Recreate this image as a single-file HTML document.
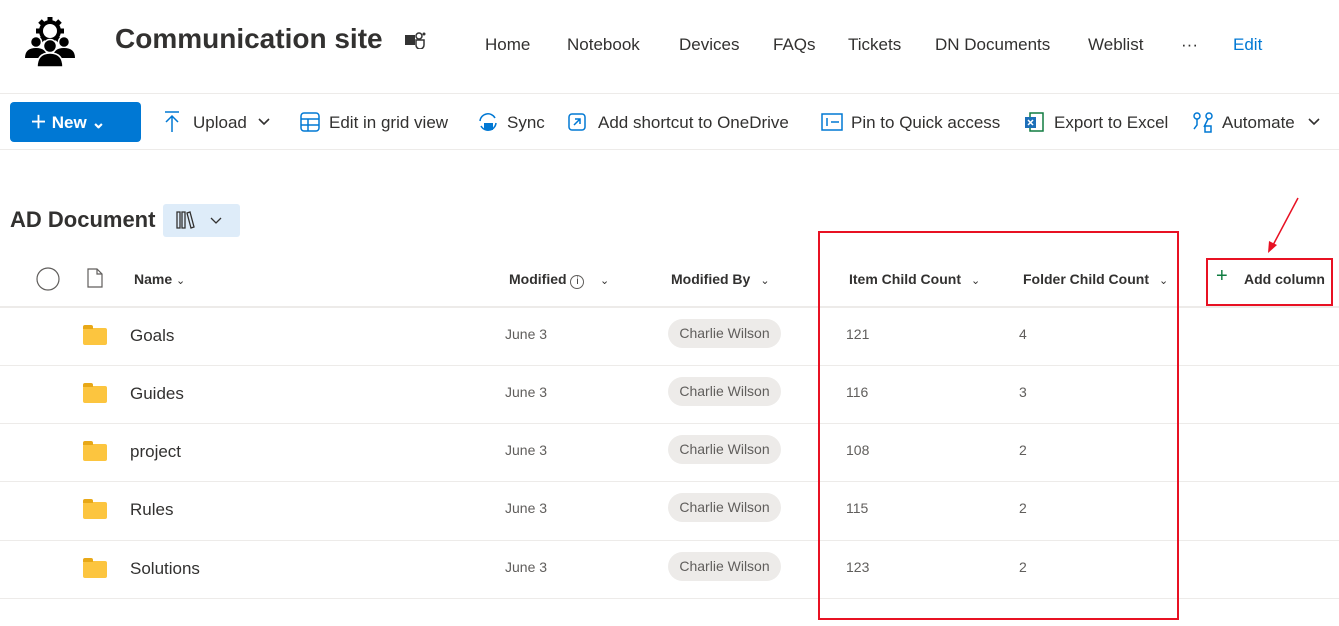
<!DOCTYPE html>
<html><head><meta charset="utf-8"><style>
*{margin:0;padding:0;box-sizing:border-box}
body{width:1339px;height:626px;background:#fff;font-family:"Segoe UI","Liberation Sans",sans-serif;color:#323130;position:relative;overflow:hidden}
.a{position:absolute;white-space:nowrap}
.nav{font-size:17px;top:35px;color:#323130}
.tb{font-size:17px;top:113px;color:#323130}
.hd{font-size:14px;font-weight:bold;top:271px;color:#323130}
.nm{font-size:17px;color:#323130}
.dt{font-size:14px;color:#605e5c}
.chip{background:#edebe9;border-radius:15px;height:29px;width:113px;font-size:14px;color:#605e5c;text-align:center;line-height:29px}
.ln{position:absolute;left:0;width:1339px;height:1px;background:#edebe9}
.fold{position:absolute;width:24px;height:17px;background:#fcc53f;border-radius:2px}
.fold:before{content:"";position:absolute;left:0;top:-3px;width:10px;height:4px;background:#e8a817;border-radius:2px 2px 0 0}
</style></head><body>
<svg class="a" style="left:24px;top:17px" width="52" height="50" viewBox="0 0 52 50"><g fill="#000"><g stroke="#000" stroke-width="5"><line x1="26" y1="0" x2="26" y2="28"/><line x1="12" y1="14" x2="40" y2="14"/><line x1="16" y1="4" x2="36" y2="24"/><line x1="36" y1="4" x2="16" y2="24"/></g><circle cx="26" cy="14" r="11"/><circle cx="26" cy="14" r="7" fill="#fff"/><circle cx="12" cy="25" r="5.5" stroke="#fff" stroke-width="1.5"/><circle cx="40" cy="25" r="5.5" stroke="#fff" stroke-width="1.5"/><path d="M1 41q0-10 11-10q11 0 11 10z"/><path d="M29 41q0-10 11-10q11 0 11 10z"/><circle cx="26" cy="29" r="6.5" stroke="#fff" stroke-width="1.5"/><path d="M13 50q0-14 13-14q13 0 13 14z" stroke="#fff" stroke-width="1.5"/></g></svg>
<div class="a" style="left:115px;top:23px;font-size:28px;font-weight:600;color:#323130">Communication site</div>
<svg class="a" style="left:404px;top:31px" width="22" height="18"><rect x="1" y="4" width="10" height="10" fill="#333"/><circle cx="15" cy="5" r="3" fill="none" stroke="#333" stroke-width="1.5"/><path d="M12 9h8v5a4 4 0 0 1-8 0z" fill="none" stroke="#333" stroke-width="1.5"/><circle cx="20" cy="3" r="1.5" fill="#333"/></svg>
<div class="a nav" style="left:485px">Home</div>
<div class="a nav" style="left:567px">Notebook</div>
<div class="a nav" style="left:679px">Devices</div>
<div class="a nav" style="left:773px">FAQs</div>
<div class="a nav" style="left:848px">Tickets</div>
<div class="a nav" style="left:935px">DN Documents</div>
<div class="a nav" style="left:1088px">Weblist</div>
<div class="a nav" style="left:1181px">···</div>
<div class="a nav" style="left:1233px;color:#0078d4">Edit</div>
<div class="ln" style="top:93px"></div>
<div class="a" style="left:10px;top:102px;width:131px;height:40px;background:#0078d4;border-radius:4px;color:#fff;font-size:17px;font-weight:bold;line-height:41px;padding-left:20px">＋&nbsp;New&nbsp;⌄</div>
<svg class="a" style="left:163px;top:111px" width="18" height="22"><path d="M2 1h14M9 21V5M3 11l6-6 6 6" fill="none" stroke="#0078d4" stroke-width="1.5"/></svg>
<div class="a tb" style="left:193px">Upload</div>
<svg class="a" style="left:258px;top:118px" width="12" height="8"><path d="M1 1l5 5 5-5" fill="none" stroke="#323130" stroke-width="1.6"/></svg>
<svg class="a" style="left:300px;top:112px" width="20" height="20"><rect x="1" y="1" width="18" height="18" rx="3" fill="none" stroke="#0078d4" stroke-width="1.5"/><path d="M1 7h18M1 13h18M8 7v12" stroke="#0078d4" stroke-width="1.5"/></svg>
<div class="a tb" style="left:329px">Edit in grid view</div>
<svg class="a" style="left:477px;top:111px" width="22" height="22"><path d="M3 10a8 8 0 0 1 15-3M19 12a8 8 0 0 1-15 3" fill="none" stroke="#0078d4" stroke-width="1.5"/><rect x="7" y="12" width="9" height="7" fill="#0078d4"/></svg>
<div class="a tb" style="left:507px">Sync</div>
<svg class="a" style="left:568px;top:113px" width="18" height="18"><rect x="1" y="1" width="16" height="16" rx="3" fill="none" stroke="#0078d4" stroke-width="1.5"/><path d="M6 12l6-6M7 6h5v5" fill="none" stroke="#0078d4" stroke-width="1.5"/></svg>
<div class="a tb" style="left:598px">Add shortcut to OneDrive</div>
<svg class="a" style="left:821px;top:113px" width="22" height="18"><rect x="1" y="1" width="20" height="16" fill="none" stroke="#0078d4" stroke-width="1.5"/><path d="M6 5v8M10 9h8" stroke="#0078d4" stroke-width="1.5"/></svg>
<div class="a tb" style="left:851px">Pin to Quick access</div>
<svg class="a" style="left:1024px;top:112px" width="20" height="20"><rect x="6" y="1" width="13" height="18" fill="none" stroke="#107c41" stroke-width="1.5"/><rect x="1" y="5" width="11" height="11" fill="#1d6fb8"/><path d="M4 8l5 5M9 8l-5 5" stroke="#fff" stroke-width="1.5"/></svg>
<div class="a tb" style="left:1054px">Export to Excel</div>
<svg class="a" style="left:1192px;top:111px" width="22" height="22"><circle cx="5" cy="5" r="3" fill="none" stroke="#0078d4" stroke-width="1.5"/><circle cx="17" cy="5" r="3" fill="none" stroke="#0078d4" stroke-width="1.5"/><rect x="13" y="15" width="6" height="6" fill="none" stroke="#0078d4" stroke-width="1.5"/><path d="M5 8v6l-3 4M16 8l-4 8" fill="none" stroke="#0078d4" stroke-width="1.5"/></svg>
<div class="a tb" style="left:1222px">Automate</div>
<svg class="a" style="left:1308px;top:118px" width="12" height="8"><path d="M1 1l5 5 5-5" fill="none" stroke="#323130" stroke-width="1.6"/></svg>
<div class="ln" style="top:149px"></div>
<div class="a" style="left:10px;top:207px;font-size:22px;font-weight:600">AD Document</div>
<div class="a" style="left:163px;top:204px;width:77px;height:33px;background:#deecf9;border-radius:3px"></div>
<svg class="a" style="left:175px;top:210px" width="20" height="20"><path d="M2 2h3v16H2zM7 2h3v16H7zM12 3l3-1 4 15-3 1z" fill="none" stroke="#323130" stroke-width="1.3"/></svg>
<svg class="a" style="left:210px;top:217px" width="12" height="8"><path d="M1 1l5 5 5-5" fill="none" stroke="#323130" stroke-width="1.3"/></svg>
<svg class="a" style="left:36px;top:267px" width="24" height="24"><circle cx="12" cy="12" r="11" fill="none" stroke="#605e5c" stroke-width="1.2"/></svg>
<svg class="a" style="left:87px;top:268px" width="16" height="20"><path d="M1 1h9l5 5v13H1z M10 1v5h5" fill="none" stroke="#605e5c" stroke-width="1.2"/></svg>
<div class="a hd" style="left:134px">Name <span style="font-weight:normal;font-size:11px">⌄</span></div>
<div class="a hd" style="left:509px">Modified <span style="font-weight:normal;border:1px solid #605e5c;border-radius:50%;font-size:10px;display:inline-block;width:14px;height:14px;text-align:center;line-height:12px">i</span> &nbsp;&nbsp;&nbsp;<span style="font-weight:normal;font-size:11px">⌄</span></div>
<div class="a hd" style="left:671px">Modified By <span style="font-weight:normal;font-size:11px">&nbsp;&nbsp;⌄</span></div>
<div class="a hd" style="left:849px">Item Child Count <span style="font-weight:normal;font-size:11px">&nbsp;&nbsp;⌄</span></div>
<div class="a hd" style="left:1023px">Folder Child Count <span style="font-weight:normal;font-size:11px">&nbsp;&nbsp;⌄</span></div>
<div class="a" style="left:1216px;top:265px;font-size:20px;color:#107c41;font-weight:300">+</div>
<div class="a hd" style="left:1244px">Add column</div>
<div class="ln" style="top:306px;height:2px"></div>

<div class="fold" style="left:83px;top:328px"></div><div class="a nm" style="left:130px;top:326px">Goals</div><div class="a dt" style="left:505px;top:326px">June 3</div><div class="a chip" style="left:668px;top:319px">Charlie Wilson</div><div class="a dt" style="left:846px;top:326px">121</div><div class="a dt" style="left:1019px;top:326px">4</div>
<div class="ln" style="top:365px"></div>
<div class="fold" style="left:83px;top:386px"></div><div class="a nm" style="left:130px;top:384px">Guides</div><div class="a dt" style="left:505px;top:384px">June 3</div><div class="a chip" style="left:668px;top:377px">Charlie Wilson</div><div class="a dt" style="left:846px;top:384px">116</div><div class="a dt" style="left:1019px;top:384px">3</div>
<div class="ln" style="top:423px"></div>
<div class="fold" style="left:83px;top:444px"></div><div class="a nm" style="left:130px;top:442px">project</div><div class="a dt" style="left:505px;top:442px">June 3</div><div class="a chip" style="left:668px;top:435px">Charlie Wilson</div><div class="a dt" style="left:846px;top:442px">108</div><div class="a dt" style="left:1019px;top:442px">2</div>
<div class="ln" style="top:481px"></div>
<div class="fold" style="left:83px;top:502px"></div><div class="a nm" style="left:130px;top:500px">Rules</div><div class="a dt" style="left:505px;top:500px">June 3</div><div class="a chip" style="left:668px;top:493px">Charlie Wilson</div><div class="a dt" style="left:846px;top:500px">115</div><div class="a dt" style="left:1019px;top:500px">2</div>
<div class="ln" style="top:540px"></div>
<div class="fold" style="left:83px;top:561px"></div><div class="a nm" style="left:130px;top:559px">Solutions</div><div class="a dt" style="left:505px;top:559px">June 3</div><div class="a chip" style="left:668px;top:552px">Charlie Wilson</div><div class="a dt" style="left:846px;top:559px">123</div><div class="a dt" style="left:1019px;top:559px">2</div>
<div class="ln" style="top:598px"></div>

<div class="a" style="left:818px;top:231px;width:361px;height:389px;border:2px solid #e81123"></div>
<div class="a" style="left:1206px;top:258px;width:127px;height:48px;border:2px solid #e81123"></div>
<svg class="a" style="left:1260px;top:195px" width="44" height="62"><line x1="38" y1="3" x2="12" y2="52" stroke="#e81123" stroke-width="1.5"/><path d="M8 58l1-12 8 4z" fill="#e81123"/></svg>
</body></html>
